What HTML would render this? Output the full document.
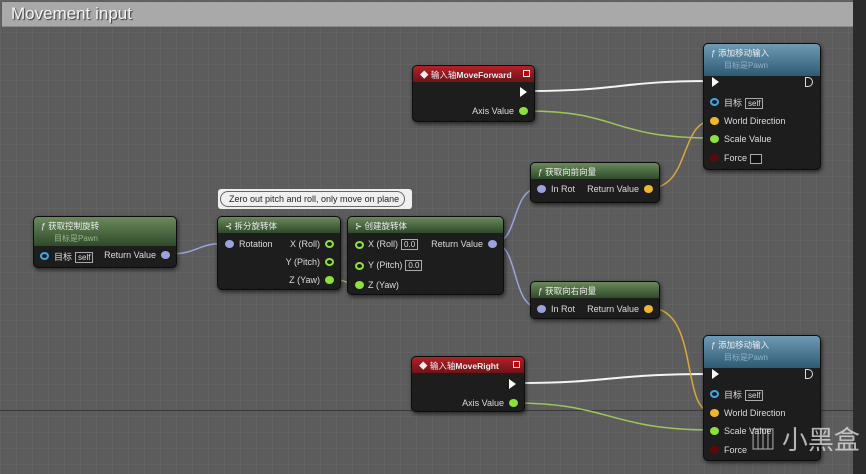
<!DOCTYPE html>
<html><head><meta charset="utf-8"><style>
*{margin:0;padding:0;box-sizing:border-box}
body{width:866px;height:474px;overflow:hidden;background:#2b2b2b;font-family:"Liberation Sans","Noto Sans CJK SC",sans-serif;position:relative}
#c{position:absolute;left:0;top:0;width:853px;height:474px;background-color:#5c5c5c;
background-image:linear-gradient(#3a3a3a,#3a3a3a),linear-gradient(90deg,rgba(255,255,255,.04) 1px,transparent 1px),linear-gradient(rgba(255,255,255,.04) 1px,transparent 1px);
background-size:100% 1px,16px 16px,16px 16px;background-position:0 410px,0 0,0 0;background-repeat:no-repeat,repeat,repeat}
#hd{position:absolute;left:2px;top:2px;width:851px;height:25px;background:#a9a9a9;border-bottom:1px solid #8a8a8a}
#hd span{position:absolute;left:9px;top:2px;font-size:17px;color:#f4f4f4;text-shadow:1px 1px 1px #333}
.n{position:absolute;background:#1c1d1c;border:1px solid #0c0c0c;border-radius:5px;box-shadow:1px 2px 4px rgba(0,0,0,.6);color:#e8e8e8;font-size:9px;overflow:hidden}
.h{position:relative;height:16px;padding:3px 0 0 7px;font-size:8.5px;color:#eee;white-space:nowrap}
.hr{background:linear-gradient(#b32128,#6d1418)}
.hg{background:linear-gradient(#6b8a5c,#2f4a2a)}
.hb{background:linear-gradient(#6e9ab4,#2f5a74)}
.sub{color:#8fb0c6;font-size:8px;position:absolute;left:20px;top:16px}
.r{position:absolute;white-space:nowrap;font-size:9px;color:#ddd}
.p{position:absolute;width:9px;height:8px;border-radius:50%}
.ex{position:absolute;width:0;height:0;border-left:7px solid #fff;border-top:5px solid transparent;border-bottom:5px solid transparent}
.bx{border:1px solid #aaa;padding:0 2px;font-size:8px;margin-left:3px}
</style></head><body>
<div id="c"></div>
<div id="hd"><span>Movement input</span></div>
<svg width="866" height="474" style="position:absolute;left:0;top:0">
<g fill="none" stroke-width="2">
<path d="M530 91 C620 91,620 81,710 81" stroke="#f4f4f4"/>
<path d="M520 383 C610 383,610 374,710 374" stroke="#f4f4f4"/>
<path d="M527 111 C620 111,610 138,712 138" stroke="#9bc65c" stroke-width="1.5"/>
<path d="M514 403 C610 403,610 430,712 430" stroke="#9bc65c" stroke-width="1.5"/>
<path d="M650 188 C690 188,680 121,712 121" stroke="#d8a838" stroke-width="1.5"/>
<path d="M650 308 C700 308,680 412,712 412" stroke="#d8a838" stroke-width="1.5"/>
<path d="M168 254 C200 254,195 243,230 243" stroke="#9aa2e0" stroke-width="1.5"/>
<path d="M493 243 C520 243,510 188,540 188" stroke="#9aa2e0" stroke-width="1.5"/>
<path d="M493 243 C520 243,510 308,540 308" stroke="#9aa2e0" stroke-width="1.5"/>
<path d="M331 279 C345 279,345 284,358 284" stroke="#9bc65c" stroke-width="1.5"/>
</g></svg>

<div style="position:absolute;left:218px;top:189px;width:194px;height:20px;background:#f0f0f0;border-radius:3px"></div>
<div style="position:absolute;left:220px;top:191px;width:185px;height:16px;border:1px solid #666;border-radius:8px;font-size:9px;color:#222;padding:2px 0 0 8px;white-space:nowrap">Zero out pitch and roll, only move on plane</div>

<div class="n" style="left:412px;top:65px;width:123px;height:57px">
<div class="h hr">◆ 输入轴<b>MoveForward</b><span style="position:absolute;right:4px;top:4px;width:7px;height:7px;background:#c00;border:1px solid #eee"></span></div>
<div class="ex" style="left:107px;top:21px"></div>
<div class="r" style="right:20px;top:40px">Axis Value</div>
<div class="p" style="right:6px;top:41px;background:#8ee03a"></div>
</div>

<div class="n" style="left:411px;top:356px;width:114px;height:56px">
<div class="h hr">◆ 输入轴<b>MoveRight</b><span style="position:absolute;right:4px;top:4px;width:7px;height:7px;background:#c00;border:1px solid #eee"></span></div>
<div class="ex" style="left:97px;top:22px"></div>
<div class="r" style="right:20px;top:41px">Axis Value</div>
<div class="p" style="right:6px;top:42px;background:#8ee03a"></div>
</div>

<div class="n" style="left:703px;top:43px;width:118px;height:127px">
<div class="h hb" style="height:32px">ƒ 添加移动输入<div class="sub">目标是Pawn</div></div>
<div class="ex" style="left:8px;top:33px"></div>
<div style="position:absolute;right:7px;top:33px;width:8px;height:10px;border:1px solid #ddd;border-radius:0 5px 5px 0"></div>
<div class="p" style="left:6px;top:54px;border:2px solid #3fa6e0"></div><div class="r" style="left:20px;top:52px">目标<span class="bx">self</span></div>
<div class="p" style="left:6px;top:73px;background:#f0b828"></div><div class="r" style="left:20px;top:72px">World Direction</div>
<div class="p" style="left:6px;top:91px;background:#8ee03a"></div><div class="r" style="left:20px;top:90px">Scale Value</div>
<div class="p" style="left:6px;top:110px;background:#5a0a0a"></div><div class="r" style="left:20px;top:109px">Force<span class="bx" style="display:inline-block;width:12px;height:10px;vertical-align:middle;background:#111"></span></div>
</div>
<div class="n" style="left:703px;top:335px;width:118px;height:126px">
<div class="h hb" style="height:32px">ƒ 添加移动输入<div class="sub">目标是Pawn</div></div>
<div class="ex" style="left:8px;top:33px"></div>
<div style="position:absolute;right:7px;top:33px;width:8px;height:10px;border:1px solid #ddd;border-radius:0 5px 5px 0"></div>
<div class="p" style="left:6px;top:54px;border:2px solid #3fa6e0"></div><div class="r" style="left:20px;top:52px">目标<span class="bx">self</span></div>
<div class="p" style="left:6px;top:73px;background:#f0b828"></div><div class="r" style="left:20px;top:72px">World Direction</div>
<div class="p" style="left:6px;top:91px;background:#8ee03a"></div><div class="r" style="left:20px;top:90px">Scale Value</div>
<div class="p" style="left:6px;top:110px;background:#5a0a0a"></div><div class="r" style="left:20px;top:109px">Force</div>
</div>

<div class="n" style="left:530px;top:162px;width:130px;height:41px">
<div class="h hg">ƒ 获取向前向量</div>
<div class="p" style="left:6px;top:22px;background:#9aa2e0"></div><div class="r" style="left:20px;top:21px">In Rot</div>
<div class="r" style="right:20px;top:21px">Return Value</div><div class="p" style="right:6px;top:22px;background:#f0b828"></div>
</div>
<div class="n" style="left:530px;top:281px;width:130px;height:38px">
<div class="h hg">ƒ 获取向右向量</div>
<div class="p" style="left:6px;top:23px;background:#9aa2e0"></div><div class="r" style="left:20px;top:22px">In Rot</div>
<div class="r" style="right:20px;top:22px">Return Value</div><div class="p" style="right:6px;top:23px;background:#f0b828"></div>
</div>

<div class="n" style="left:33px;top:216px;width:144px;height:52px">
<div class="h hg" style="height:29px">ƒ 获取控制旋转<div class="sub" style="color:#9bb890">目标是Pawn</div></div>
<div class="p" style="left:6px;top:35px;border:2px solid #3fa6e0"></div><div class="r" style="left:20px;top:33px">目标<span class="bx">self</span></div>
<div class="r" style="right:20px;top:33px">Return Value</div><div class="p" style="right:6px;top:34px;background:#9aa2e0"></div>
</div>

<div class="n" style="left:217px;top:216px;width:124px;height:74px">
<div class="h hg">⊰ 拆分旋转体</div>
<div class="p" style="left:7px;top:23px;background:#9aa2e0"></div><div class="r" style="left:21px;top:22px">Rotation</div>
<div class="r" style="right:20px;top:22px">X (Roll)</div><div class="p" style="right:6px;top:23px;border:2px solid #8ee03a"></div>
<div class="r" style="right:20px;top:40px">Y (Pitch)</div><div class="p" style="right:6px;top:41px;border:2px solid #8ee03a"></div>
<div class="r" style="right:20px;top:58px">Z (Yaw)</div><div class="p" style="right:6px;top:59px;background:#8ee03a"></div>
</div>

<div class="n" style="left:347px;top:216px;width:157px;height:79px">
<div class="h hg">⊱ 创建旋转体</div>
<div class="p" style="left:7px;top:24px;border:2px solid #8ee03a"></div><div class="r" style="left:20px;top:22px">X (Roll)<span class="bx">0.0</span></div>
<div class="p" style="left:7px;top:45px;border:2px solid #8ee03a"></div><div class="r" style="left:20px;top:43px">Y (Pitch)<span class="bx">0.0</span></div>
<div class="p" style="left:7px;top:64px;background:#8ee03a"></div><div class="r" style="left:20px;top:63px">Z (Yaw)</div>
<div class="r" style="right:20px;top:22px">Return Value</div><div class="p" style="right:6px;top:23px;background:#9aa2e0"></div>
</div>

<div style="position:absolute;left:750px;top:420px;font-size:26px;color:rgba(230,230,230,.75);font-family:'Noto Sans CJK SC',sans-serif">▥ 小黑盒</div>
</body></html>
